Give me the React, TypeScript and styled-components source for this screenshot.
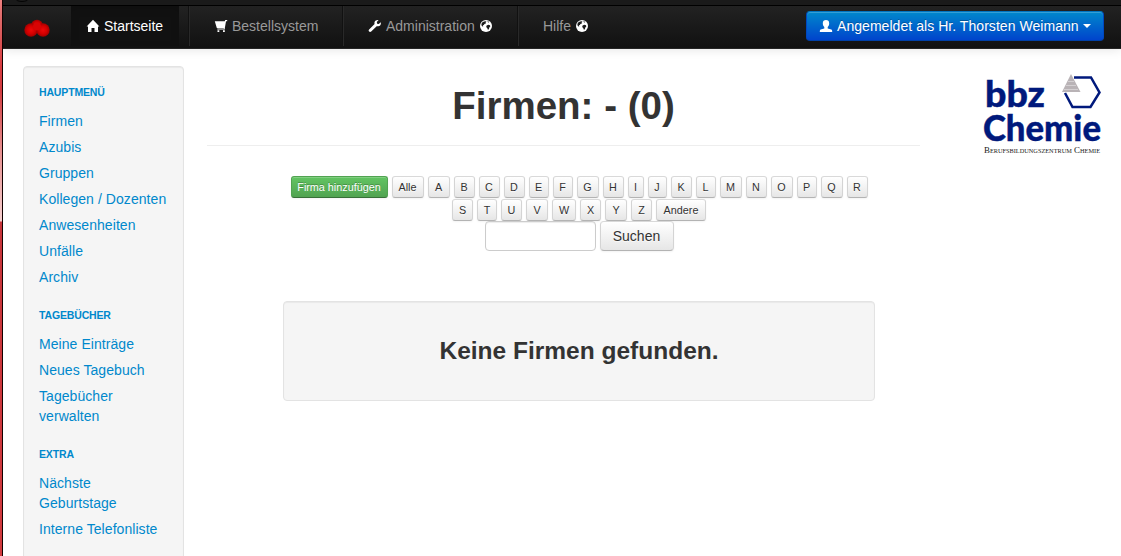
import React from 'react';
import styled, { createGlobalStyle } from 'styled-components';

const GlobalStyle = createGlobalStyle`
  * { box-sizing: border-box; }
  html, body { margin: 0; padding: 0; height: 100%; overflow: hidden; background: #fff; }
  body { font: 14px/20px "Liberation Sans", Arial, sans-serif; color: #333; }
`;

const Frame = styled.div`
  display: flex;
  height: 556px;
  overflow: hidden;
`;
const Edge = styled.div`
  width: 3px;
  flex: none;
  border-right: 1px solid #100;
  background: linear-gradient(#f08080 0, #e86c6c 20px, #d83c40 66px, #d23c40 90px, #e89090 150px, #f6d0d0 221px, #c8343a 222px, #d23a3e 100%);
`;
const Page = styled.div`
  flex: 1;
  min-width: 0;
`;
const WindowBar = styled.div`
  height: 6px;
  background: #1b1b1b;
  border-bottom: 1px solid #000;
  svg { display: block; margin-left: 11px; }
`;
const Navbar = styled.nav`
  display: flex;
  height: 43px;
  background: linear-gradient(#222, #111);
  border-bottom: 1px solid #252525;
  box-shadow: 0 1px 10px rgba(0, 0, 0, 0.1);
  padding-right: 17px;
`;
const Brand = styled.a`
  width: 68px;
  padding: 13px 0 0 20px;
  svg { display: block; }
`;
const NavLink = styled.a<{ $active?: boolean; $width: number }>`
  display: flex;
  align-items: center;
  gap: 4px;
  width: ${p => p.$width}px;
  height: 40px;
  padding-left: 15px;
  white-space: nowrap;
  color: ${p => (p.$active ? '#fff' : '#999')};
  background: ${p => (p.$active ? '#111' : 'transparent')};
  box-shadow: ${p => (p.$active ? 'inset 0 3px 8px rgba(0,0,0,.125)' : 'none')};
`;
const Divider = styled.i`
  width: 2px;
  height: 40px;
  margin: 0 9px;
  border-left: 1px solid #111;
  border-right: 1px solid #292929;
`;
const Glyph = styled.svg`
  width: 14px;
  height: 14px;
  flex: none;
  display: block;
  fill: #fff;
`;
const UserButton = styled.button`
  display: flex;
  align-items: center;
  gap: 4px;
  width: 298px;
  height: 30px;
  margin: 5px 0 0 auto;
  padding: 0 12px;
  font: inherit;
  letter-spacing: 0.05px;
  white-space: nowrap;
  color: #fff;
  text-shadow: 0 -1px 0 rgba(0, 0, 0, 0.25);
  border: 1px solid #04b;
  border-color: #0074c0 #0048c0 #0040a8;
  border-radius: 4px;
  background: linear-gradient(#08c, #04c);
  box-shadow: inset 0 1px 0 rgba(255, 255, 255, 0.2);
`;
const Caret = styled.span`
  border: 4px solid transparent;
  border-top-color: #fff;
  border-bottom: 0;
`;
const Body = styled.div`
  display: flex;
  align-items: flex-start;
  padding: 17px 19px 0 20px;
`;
const Sidebar = styled.aside`
  width: 161px;
  height: 520px;
  flex: none;
  padding: 12px 14px 0 15px;
  background: #f5f5f5;
  border: 1px solid #e3e3e3;
  border-radius: 4px;
  box-shadow: inset 0 1px 1px rgba(0, 0, 0, 0.05);
`;
const MenuSection = styled.section`
  margin-bottom: 12px;
`;
const MenuTitle = styled.h2`
  margin: 0 0 3px;
  padding: 3px 0;
  font-size: 10.5px;
  line-height: 20px;
  font-weight: bold;
  letter-spacing: -0.15px;
  color: #08c;
`;
const MenuLink = styled.a`
  display: block;
  padding: 3px 0;
  margin-right: -10px;
  letter-spacing: 0.06px;
  color: #08c;
  white-space: pre-line;
`;
const Main = styled.main`
  width: 713px;
  margin-left: 23px;
  flex: none;
`;
const Title = styled.h1`
  margin: 0;
  height: 80px;
  padding-top: 20px;
  font-size: 38.5px;
  line-height: 40px;
  text-align: center;
  border-bottom: 1px solid #eee;
`;
const Center = styled.div`
  width: 592px;
  margin: 30px 0 0 76px;
`;
const Row = styled.div<{ $height: number }>`
  display: flex;
  justify-content: center;
  gap: 4px;
  height: ${p => p.$height}px;
`;
const Button = styled.button<{ $width: number; $kind?: 'success' | 'large' }>`
  width: ${p => p.$width}px;
  height: ${p => (p.$kind === 'large' ? 30 : 22)}px;
  padding: 0;
  font: ${p => (p.$kind === 'large' ? '14px/20px' : '10.8px/20px')} "Liberation Sans", Arial, sans-serif;
  white-space: nowrap;
  color: ${p => (p.$kind === 'success' ? '#fff' : '#333')};
  text-shadow: ${p => (p.$kind === 'success' ? '0 -1px 0 rgba(0,0,0,.25)' : '0 1px 1px rgba(255,255,255,.75)')};
  border: 1px solid;
  border-color: ${p => (p.$kind === 'success' ? '#51a351 #51a351 #387038' : '#d9d9d9 #d4d4d4 #b3b3b3')};
  border-radius: ${p => (p.$kind === 'large' ? 4 : 3)}px;
  background: ${p => (p.$kind === 'success' ? 'linear-gradient(#62c462, #51a351)' : 'linear-gradient(#fff, #e6e6e6)')};
  box-shadow: inset 0 1px 0 rgba(255, 255, 255, 0.2), 0 1px 2px rgba(0, 0, 0, 0.05);
`;
const SearchInput = styled.input`
  width: 111px;
  height: 30px;
  padding: 4px 6px;
  border: 1px solid #ccc;
  border-radius: 4px;
  background: #fff;
  box-shadow: inset 0 1px 1px rgba(0, 0, 0, 0.075);
`;
const Notice = styled.div`
  height: 100px;
  margin-top: 50px;
  padding-top: 29px;
  text-align: center;
  font-weight: bold;
  font-size: 24.5px;
  line-height: 40px;
  background: #f5f5f5;
  border: 1px solid #e3e3e3;
  border-radius: 4px;
  box-shadow: inset 0 1px 1px rgba(0, 0, 0, 0.05);
`;
const Logo = styled.svg`
  display: block;
  width: 122px;
  height: 86px;
  margin: 6px 0 0 60px;
  flex: none;
  overflow: visible;
`;
const LogoCaption = styled.text`
  font-family: "Liberation Serif", serif;
  font-size: 8.5px;
  font-variant-caps: small-caps;
  fill: #222;
`;

const Globe = () => (
  <Glyph viewBox="0 0 14 14">
    <circle cx="7" cy="7" r="6" />
    <path fill="#1a1a1a" d="M3.2 3.6 5 2.4l1.7-.2.8.6-.9.7.3.9-1.6.5-.3 1-1.2.4.5.9-.9.2L2.4 6.2l.1-1.4zM8.3 2.2l1.300.3.5.8-1 .3zM7.6 6.4l1.7-.7 1.7.6.3 1.300-1 1-.4 1.600-1 .6-.6-1.500L7.200 8z" />
  </Glyph>
);

const menu = [
  { title: 'HAUPTMENÜ', links: ['Firmen', 'Azubis', 'Gruppen', 'Kollegen / Dozenten', 'Anwesenheiten', 'Unfälle', 'Archiv'] },
  { title: 'TAGEBÜCHER', links: ['Meine Einträge', 'Neues Tagebuch', 'Tagebücher\nverwalten'] },
  { title: 'EXTRA', links: ['Nächste\nGeburtstage', 'Interne Telefonliste'] },
];

const firstRow: [string, number][] = [
  ['Alle', 32], ['A', 22], ['B', 21], ['C', 21], ['D', 21], ['E', 20], ['F', 20], ['G', 22], ['H', 21], ['I', 16],
  ['J', 19], ['K', 21], ['L', 20], ['M', 22], ['N', 21], ['O', 22], ['P', 20], ['Q', 22], ['R', 21],
];
const secondRow: [string, number][] = [
  ['S', 21], ['T', 20], ['U', 21], ['V', 22], ['W', 24], ['X', 21], ['Y', 22], ['Z', 21], ['Andere', 50],
];

export default function App() {
  return (
    <Frame>
      <GlobalStyle />
      <Edge />
      <Page>
        <WindowBar>
          <svg width="16" height="3"><ellipse cx="8" cy="-1" rx="6" ry="2.5" fill="none" stroke="#050505" /></svg>
        </WindowBar>
        <Navbar>
          <Brand>
            <svg width="28" height="20" viewBox="0 0 28 20">
              <defs>
                <radialGradient id="ball">
                  <stop offset="0" stopColor="#ee0808" />
                  <stop offset=".6" stopColor="#d40000" />
                  <stop offset="1" stopColor="#a00000" />
                </radialGradient>
              </defs>
              <circle cx="14" cy="6.7" r="6" fill="url(#ball)" />
              <circle cx="8" cy="11" r="6.7" fill="url(#ball)" />
              <circle cx="20" cy="11" r="6.7" fill="url(#ball)" />
              <circle cx="14" cy="7.5" r="4" fill="#d80404" />
            </svg>
          </Brand>
          <NavLink $active $width={108}>
            <Glyph viewBox="0 0 14 14"><path d="M7 .8 13.4 7.4H12V13H8.5V9h-3v4H2V7.4H.6z" /></Glyph>
            Startseite
          </NavLink>
          <Divider />
          <NavLink $width={134}>
            <Glyph viewBox="0 0 14 14"><path d="M.8 2.2h10L11.200 1H13.200v1.200h-1.200L10.800 9.200v1.300H3.300v-1h6.500V9H2.800zM3.500 11.200h1.800V13H3.500zm5.500 0h1.800V13H9z" /></Glyph>
            Bestellsystem
          </NavLink>
          <Divider />
          <NavLink $width={155}>
            <Glyph viewBox="0 0 14 14"><path d="M12.7 3.2 10.8 5 9.1 4.7 8.8 3l1.8-1.9C8.9.7 7 1.6 6.5 3.2c-.2.7-.1 1.3.1 1.9L1.1 10.6c-.6.6-.6 1.4 0 2s1.5.6 2.1 0l5.5-5.4c2.6.8 4.9-1.4 4-4z" /></Glyph>
            Administration
            <Globe />
          </NavLink>
          <Divider />
          <NavLink $width={76}>
            Hilfe
            <Globe />
          </NavLink>
          <UserButton>
            <Glyph viewBox="0 0 14 14"><path d="M7 1c2 0 3.2 1.2 3.2 3.2 0 1.7-.6 3-1.5 3.800v1.400l3.600 1.200c.7.3.9 1 .9 2.400H.8c0-1.400.2-2.100.9-2.400l3.600-1.200V8c-.9-.8-1.500-2.100-1.500-3.800C3.800 2.200 5 1 7 1z" /></Glyph>
            Angemeldet als Hr. Thorsten Weimann
            <Caret />
          </UserButton>
        </Navbar>
        <Body>
          <Sidebar>
            {menu.map(section => (
              <MenuSection key={section.title}>
                <MenuTitle>{section.title}</MenuTitle>
                {section.links.map(link => <MenuLink key={link}>{link}</MenuLink>)}
              </MenuSection>
            ))}
          </Sidebar>
          <Main>
            <Title>Firmen: - (0)</Title>
            <Center>
              <Row $height={23}>
                <Button $width={97} $kind="success">Firma hinzufügen</Button>
                {firstRow.map(([label, width]) => <Button key={label} $width={width}>{label}</Button>)}
              </Row>
              <Row $height={22}>
                {secondRow.map(([label, width]) => <Button key={label} $width={width}>{label}</Button>)}
              </Row>
              <Row $height={30}>
                <SearchInput />
                <Button $width={74} $kind="large">Suchen</Button>
              </Row>
              <Notice>Keine Firmen gefunden.</Notice>
            </Center>
          </Main>
          <Logo viewBox="0 0 122 86">
            <g fill="#00197c" stroke="#00197c" strokeWidth=".4" fontFamily="Lato, 'Open Sans', sans-serif" fontWeight="900">
              <text x="5" y="35" fontSize="36" textLength="60" lengthAdjust="spacingAndGlyphs">bbz</text>
              <text x="3" y="69" fontSize="36" textLength="118" lengthAdjust="spacingAndGlyphs">Chemie</text>
            </g>
            <path d="M94 5.5H111L119.5 20.5 110.5 35H92.5L85 21" fill="none" stroke="#00197c" strokeWidth="2.5" />
            <path d="M91 2 100.5 20H82z" fill="#b9b3b6" />
            <path d="M88 9.5h6M86 13.5h10M84 17.500h14" stroke="#d4d0d2" strokeWidth="1" />
            <LogoCaption x="4" y="81" textLength="116" lengthAdjust="spacingAndGlyphs">Berufsbildungszentrum Chemie</LogoCaption>
          </Logo>
        </Body>
      </Page>
    </Frame>
  );
}
